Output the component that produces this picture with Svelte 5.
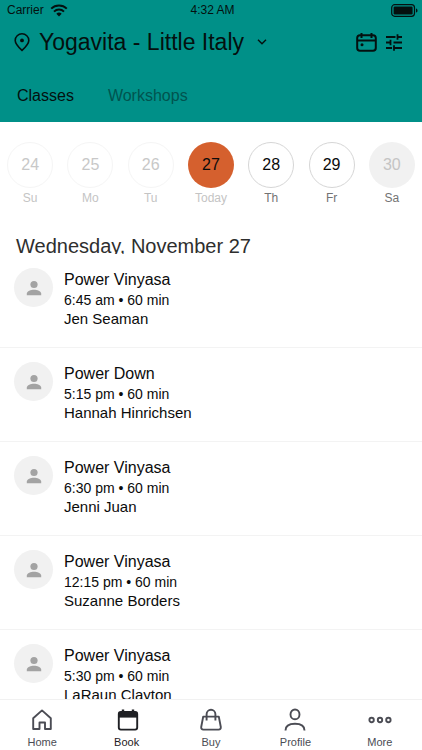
<script>
  const days = [
    { n: 24, label: 'Su', kind: 'past' },
    { n: 25, label: 'Mo', kind: 'past' },
    { n: 26, label: 'Tu', kind: 'past' },
    { n: 27, label: 'Today', kind: 'today' },
    { n: 28, label: 'Th', kind: 'open' },
    { n: 29, label: 'Fr', kind: 'open' },
    { n: 30, label: 'Sa', kind: 'closed' }
  ];
  const classes = [
    { name: 'Power Vinyasa', time: '6:45 am', teacher: 'Jen Seaman' },
    { name: 'Power Down', time: '5:15 pm', teacher: 'Hannah Hinrichsen' },
    { name: 'Power Vinyasa', time: '6:30 pm', teacher: 'Jenni Juan' },
    { name: 'Power Vinyasa', time: '12:15 pm', teacher: 'Suzanne Borders' },
    { name: 'Power Vinyasa', time: '5:30 pm', teacher: 'LaRaun Clayton' }
  ];
  const tabs = ['Home', 'Book', 'Buy', 'Profile', 'More'];
</script>

<div class="app">
  <header>
    <div class="status">
      <span class="carrier">
        Carrier
        <svg width="18" height="13" viewBox="0 0 18 13" fill="none" stroke="#04100f" stroke-width="2">
          <path d="M1.2 4.6a11.3 11.3 0 0 1 15.6 0M4 7.6a7.2 7.2 0 0 1 10 0" />
          <path d="M9 12.6 6.3 9.8a3.9 3.9 0 0 1 5.4 0z" fill="#04100f" stroke="none" />
        </svg>
      </span>
      <span>4:32 AM</span>
      <span class="battery">
        <svg width="27" height="13" viewBox="0 0 27 13">
          <rect x=".7" y=".7" width="22.8" height="11.6" rx="3" fill="none" stroke="#04100f" stroke-width="1.2" />
          <rect x="2.6" y="2.6" width="19" height="7.8" rx="1.2" fill="#04100f" />
          <path d="M25 4.4c2 .6 2 3.6 0 4.2z" fill="#04100f" />
        </svg>
      </span>
    </div>
    <div class="title">
      <button class="location">
        <svg width="16" height="19" viewBox="0 0 16 19" fill="none" stroke="#04100f" stroke-width="1.6">
          <path d="M8 17.4C4.6 14.2 1.2 11 1.2 7.4a6.8 6.6 0 0 1 13.6 0c0 3.6-3.4 6.8-6.8 10z" />
          <circle cx="8" cy="7.4" r="1.9" fill="#04100f" stroke="none" />
        </svg>
        <span>Yogavita - Little Italy</span>
        <svg width="10" height="6" viewBox="0 0 10 6" fill="none" stroke="#04100f" stroke-width="1.4">
          <path d="m1 .8 4 4 4-4" />
        </svg>
      </button>
      <button aria-label="Calendar">
        <svg width="21" height="20" viewBox="0 0 21 20" fill="none" stroke="#04100f" stroke-width="2">
          <rect x="1.2" y="3.2" width="18.6" height="15.6" rx="2.8" />
          <path d="M1.2 8.5h18.6M5.5 1v5M15.5 1v5" />
          <circle cx="6" cy="12.7" r="1.5" fill="#04100f" stroke="none" />
        </svg>
      </button>
      <button aria-label="Filters">
        <svg width="18" height="18" viewBox="0 0 18 18" fill="none" stroke="#04100f" stroke-width="1.8">
          <path d="M1 4h9.5M12.5 4H17M12.5 1.2v5.6M1 9.5h5M8.5 9.5H17M5.5 6.7v5.6M1 15h6M9 15h8M9 12.2v5.6" />
        </svg>
      </button>
    </div>
    <nav class="kinds" aria-label="Booking type">
      <a href="#classes">Classes</a>
      <a href="#workshops" class="faded">Workshops</a>
    </nav>
  </header>

  <div class="days">
    {#each days as d}
      <button class={d.kind}>
        <span class="circle">{d.n}</span>
        <span class="label">{d.label}</span>
      </button>
    {/each}
  </div>

  <main>
    <h1>Wednesday, November 27</h1>
    <ul>
      {#each classes as c}
        <li>
          <span class="avatar">
            <svg width="16" height="16" viewBox="0 0 16 16" fill="#a3a3a3">
              <circle cx="8" cy="4.5" r="3.6" />
              <path d="M.8 15.2v-1.7C.8 11 5 9.7 8 9.7s7.2 1.3 7.2 3.8v1.7z" />
            </svg>
          </span>
          <div class="info">
            <h2>{c.name}</h2>
            <p class="time">{c.time} • 60 min</p>
            <p class="teacher">{c.teacher}</p>
          </div>
        </li>
      {/each}
    </ul>
  </main>

  <nav class="tabs" aria-label="Main">
    {#each tabs as t}
      <a href={'#' + t.toLowerCase()} class:active={t === 'Book'}>
        <svg width="24" height="24" viewBox="0 0 24 24" fill="none" stroke="currentColor" stroke-width="1.9">
          {#if t === 'Home'}
            <path d="M3.2 10.3 12 2.4l8.8 7.9V21H15v-6.500H9.500V21H3.200z" stroke-linejoin="round" />
          {:else if t === 'Book'}
            <rect x="3.800" y="4" width="18.400" height="17.600" rx="2" />
            <path d="M3.800 4h18.400v5.600H3.800z" fill="currentColor" stroke="none" />
            <path d="M8 1.500V6M18 1.500V6" stroke-width="2.400" />
          {:else if t === 'Buy'}
            <path d="M4.200 8.600h15.600l2 10.400q.2 2.600-2.200 2.600H4.400Q2 21.600 2.200 19z" stroke-linejoin="round" />
            <path d="M7.600 12.500V6.200a4.400 4.400 0 0 1 8.800 0v6.300" />
          {:else if t === 'Profile'}
            <ellipse cx="12" cy="6.400" rx="4.500" ry="4.900" />
            <path d="M2.500 22.500c0-4.500 3.500-6.700 9.500-6.700s9.500 2.200 9.500 6.700" />
          {:else}
            <circle cx="3.600" cy="12" r="2.200" />
            <circle cx="12" cy="12" r="2.200" />
            <circle cx="20.400" cy="12" r="2.200" />
          {/if}
        </svg>
        <span>{t}</span>
      </a>
    {/each}
  </nav>
</div>

<style>
  .app {
    display: flex;
    flex-direction: column;
    height: 100vh;
    overflow: hidden;
    background: #fff;
    color: #0b0b0b;
    font-family: "Liberation Sans", Arial, sans-serif;
  }
  svg { display: block; flex: none; }
  button {
    padding: 0;
    border: 0;
    background: none;
    color: inherit;
    font: inherit;
  }
  a { color: inherit; text-decoration: none; }
  h1, h2, p, ul { margin: 0; padding: 0; font-weight: 400; }
  header {
    flex: none;
    background: #009088;
    color: #04100f;
    padding-bottom: 16px;
  }
  .status {
    display: grid;
    grid-template-columns: 1fr auto 1fr;
    align-items: center;
    height: 20px;
    padding: 0 4px 0 7px;
    font-size: 12px;
  }
  .carrier { display: flex; align-items: center; gap: 6px; }
  .battery { justify-self: end; }
  .title {
    display: flex;
    align-items: center;
    gap: 8px;
    height: 44px;
    padding: 0 19px 0 14px;
  }
  .location {
    display: flex;
    align-items: center;
    gap: 9px;
    margin-right: auto;
    font-size: 23px;
    line-height: 28px;
  }
  .location svg:last-child { margin-left: 4px; }
  .kinds {
    display: flex;
    gap: 34px;
    padding: 22px 17px 0;
    font-size: 16px;
    line-height: 20px;
  }
  .faded { color: #00544f; }
  .days { display: flex; flex: none; padding-top: 20px; }
  .days button {
    display: flex;
    flex: 1;
    flex-direction: column;
    align-items: center;
    gap: 2px;
  }
  .circle {
    box-sizing: border-box;
    width: 46px;
    height: 46px;
    border: 1px solid transparent;
    border-radius: 50%;
    font-size: 16px;
    line-height: 44px;
    text-align: center;
  }
  .label { color: #737373; font-size: 12px; line-height: 16px; }
  .past .circle { border-color: #f5f5f5; color: #c8c8c8; }
  .past .label, .today .label { color: #c4c4c4; }
  .today .circle { background: #d5602e; }
  .open .circle { border-color: #d6d6d6; }
  .closed .circle { background: #f1f1f1; color: #c4c4c4; }
  main { flex: 1; min-height: 0; overflow: hidden; padding-top: 28px; }
  h1 {
    height: 20px;
    padding: 0 16px;
    overflow: hidden;
    color: #2e2e2e;
    font-size: 20px;
    line-height: 24px;
  }
  ul { list-style: none; }
  li {
    display: flex;
    box-sizing: border-box;
    gap: 11px;
    height: 94px;
    padding: 14px 14px 0;
    border-bottom: 1px solid #f3f3f3;
  }
  .avatar {
    display: grid;
    flex: none;
    place-items: center;
    width: 39px;
    height: 39px;
    border-radius: 50%;
    background: #f1f1f1;
  }
  .info { padding-top: 1px; }
  h2 { font-size: 16px; line-height: 22px; }
  .time { font-size: 14px; line-height: 18px; }
  .teacher { font-size: 15px; line-height: 19px; }
  .tabs {
    display: flex;
    flex: none;
    height: 50px;
    border-top: 1px solid #f1f1f1;
    background: #fff;
    color: #4b4c54;
  }
  .tabs a {
    display: flex;
    flex: 1;
    flex-direction: column;
    align-items: center;
    gap: 3px;
    padding-top: 8px;
    font-size: 11px;
    line-height: 14px;
  }
  .tabs .active { color: #1f2024; }
</style>
